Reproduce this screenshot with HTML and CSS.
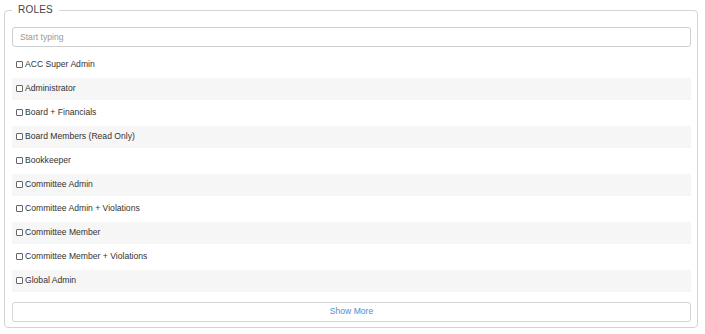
FILE: index.html
```html
<!DOCTYPE html>
<html>
<head>
<meta charset="utf-8">
<link rel="stylesheet" href="styles.css">
</head>
<body>
<fieldset class="roles">
  <legend class="roles-legend">ROLES</legend>
  <input class="search" type="text" placeholder="Start typing">
  <ul class="role-list">
    <li class="role"><input type="checkbox" class="cb"><span>ACC Super Admin</span></li>
    <li class="role"><input type="checkbox" class="cb"><span>Administrator</span></li>
    <li class="role"><input type="checkbox" class="cb"><span>Board + Financials</span></li>
    <li class="role"><input type="checkbox" class="cb"><span>Board Members (Read Only)</span></li>
    <li class="role"><input type="checkbox" class="cb"><span>Bookkeeper</span></li>
    <li class="role"><input type="checkbox" class="cb"><span>Committee Admin</span></li>
    <li class="role"><input type="checkbox" class="cb"><span>Committee Admin + Violations</span></li>
    <li class="role"><input type="checkbox" class="cb"><span>Committee Member</span></li>
    <li class="role"><input type="checkbox" class="cb"><span>Committee Member + Violations</span></li>
    <li class="role"><input type="checkbox" class="cb"><span>Global Admin</span></li>
  </ul>
  <button class="show-more" type="button">Show More</button>
</fieldset>
</body>
</html>
```
FILE: styles.css
```css
html, body {
  margin: 0;
  padding: 0;
  background: #fff;
}
body {
  font-family: "Liberation Sans", Arial, sans-serif;
  color: #333;
  padding: 4px 7px 0 4px;
}
.roles {
  margin: 0;
  border: 1px solid #d4d4d4;
  border-radius: 4px;
  padding: 11px 6px 5px 7px;
  min-width: 0;
}
.roles-legend {
  padding: 0 6px;
  font-size: 10px;
  line-height: 12px;
  color: #444;
  letter-spacing: 0.2px;
}
.search {
  display: block;
  box-sizing: border-box;
  width: 100%;
  height: 20px;
  margin: 0;
  border: 1px solid #cfcfcf;
  border-radius: 3px;
  padding: 0 7px;
  font-family: "Liberation Sans", Arial, sans-serif;
  font-size: 8.6px;
  color: #333;
  outline: none;
}
.search::placeholder {
  color: #9a9a9a;
}
.role-list {
  list-style: none;
  margin: 7px 0 0;
  padding: 0;
  display: flex;
  flex-direction: column;
  gap: 2px;
}
.role {
  height: 22px;
  display: flex;
  align-items: center;
  padding-left: 4px;
  font-size: 8.6px;
  color: #333;
}
.role:nth-child(even) {
  background: #f6f6f6;
}
.cb {
  appearance: none;
  -webkit-appearance: none;
  box-sizing: border-box;
  width: 7px;
  height: 7px;
  margin: 0 2px 1px 0;
  border: 1px solid #666;
  border-radius: 1px;
  background: #fff;
}
.role span {
  margin-top: -2px;
}
.show-more {
  display: block;
  box-sizing: border-box;
  width: 100%;
  height: 20px;
  margin: 10px 0 0;
  border: 1px solid #d4d4d4;
  border-radius: 3px;
  background: #fff;
  font-family: "Liberation Sans", Arial, sans-serif;
  font-size: 8.6px;
  color: #4a8fd6;
  padding: 0 0 3px;
}
```
